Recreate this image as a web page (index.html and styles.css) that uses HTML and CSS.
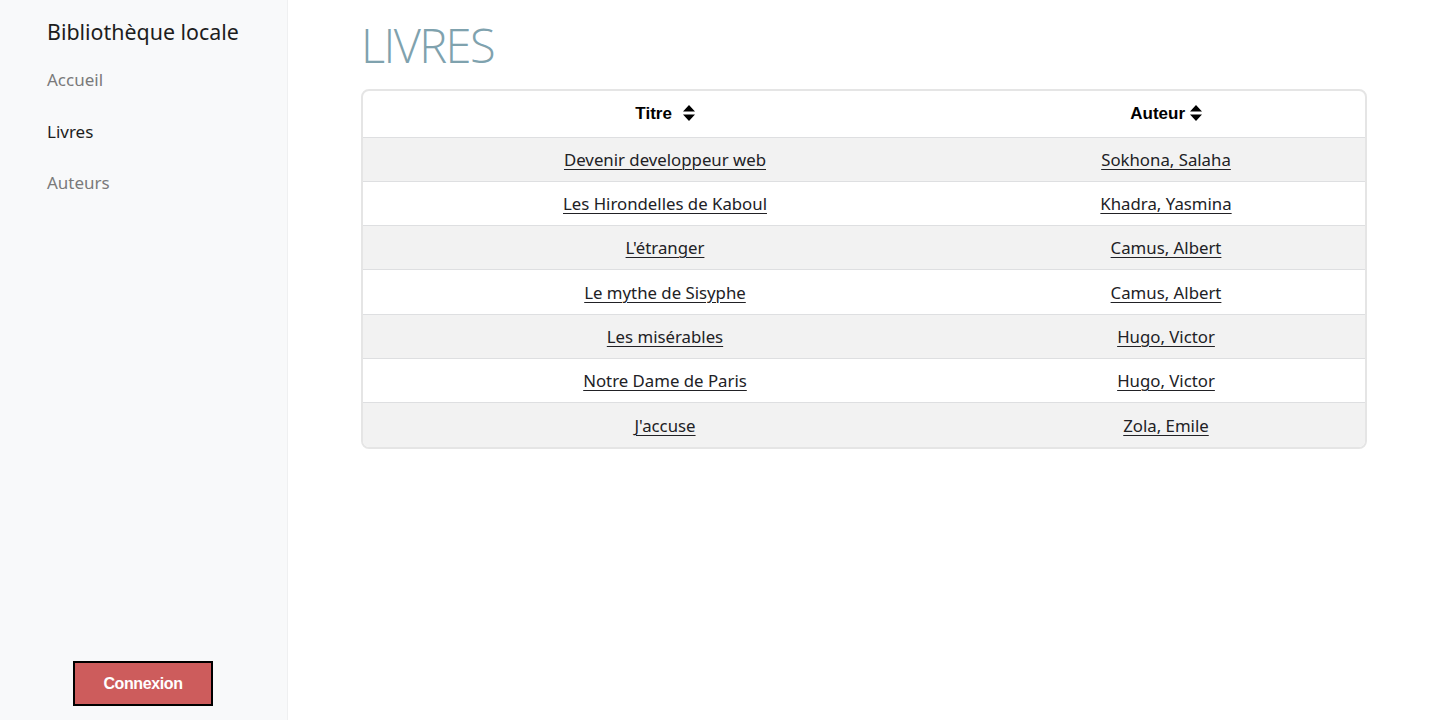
FILE: index.html
```html
<!DOCTYPE html>
<html lang="fr">
<head>
<meta charset="utf-8">
<title>Livres</title>
<link rel="stylesheet" href="styles.css">
</head>
<body>
<div class="layout">
  <aside class="sidebar">
    <div class="brand">Bibliothèque locale</div>
    <nav class="nav">
      <a class="nav-link" href="#">Accueil</a>
      <a class="nav-link active" href="#">Livres</a>
      <a class="nav-link" href="#">Auteurs</a>
    </nav>
    <div class="login-wrap">
      <button class="login">Connexion</button>
    </div>
  </aside>
  <main class="content">
    <h1 class="title">LIVRES</h1>
    <div class="table-box">
      <table class="books">
        <thead>
          <tr>
            <th class="col-title">Titre <svg class="sort sort-gap" viewBox="0 0 12 18" width="12" height="18"><path d="M6 1 L12 7.5 H0 Z M0 10.5 H12 L6 17 Z" fill="#000"/></svg></th>
            <th class="col-author">Auteur <svg class="sort" viewBox="0 0 12 18" width="12" height="18"><path d="M6 1 L12 7.5 H0 Z M0 10.5 H12 L6 17 Z" fill="#000"/></svg></th>
          </tr>
        </thead>
        <tbody>
          <tr><td><a href="#">Devenir developpeur web</a></td><td><a href="#">Sokhona, Salaha</a></td></tr>
          <tr><td><a href="#">Les Hirondelles de Kaboul</a></td><td><a href="#">Khadra, Yasmina</a></td></tr>
          <tr><td><a href="#">L'étranger</a></td><td><a href="#">Camus, Albert</a></td></tr>
          <tr><td><a href="#">Le mythe de Sisyphe</a></td><td><a href="#">Camus, Albert</a></td></tr>
          <tr><td><a href="#">Les misérables</a></td><td><a href="#">Hugo, Victor</a></td></tr>
          <tr><td><a href="#">Notre Dame de Paris</a></td><td><a href="#">Hugo, Victor</a></td></tr>
          <tr><td><a href="#">J'accuse</a></td><td><a href="#">Zola, Emile</a></td></tr>
        </tbody>
      </table>
    </div>
  </main>
</div>
</body>
</html>
```
FILE: styles.css
```css
* { box-sizing: border-box; }
html, body { margin: 0; padding: 0; }
body {
  font-family: "Noto Sans", "Open Sans", sans-serif;
  color: #212529;
  background: #fff;
}
.layout {
  display: flex;
  height: 720px;
}
.sidebar {
  width: 288px;
  flex: 0 0 288px;
  background: #f8f9fa;
  border-right: 1px solid #eff0f1;
  display: flex;
  flex-direction: column;
  padding: 17px 0 14px 47px;
}
.brand {
  font-size: 21.4px;
  color: #1d1d1d;
  line-height: 30px;
}
.nav {
  display: flex;
  flex-direction: column;
  margin-top: 8px;
}
.nav-link {
  font-size: 17px;
  line-height: 26px;
  padding: 12px 0 13.5px;
  color: #7a7a7a;
  text-decoration: none;
}
.nav-link.active { color: #1d1d1d; }
.login-wrap {
  margin-top: auto;
  padding-left: 26px;
}
.login {
  width: 140px;
  height: 45px;
  background: #cd5c5c;
  border: 2px solid #000;
  color: #fff;
  font-family: "Liberation Sans", Arial, sans-serif;
  font-weight: bold;
  font-size: 16px;
  letter-spacing: -0.4px;
  padding: 0;
}
.content {
  flex: 1;
  padding: 15px 73px 0 73px;
}
.title {
  margin: 0 0 14px;
  font-family: "Open Sans", sans-serif;
  font-weight: 300;
  font-size: 47px;
  line-height: 60px;
  color: #7fa2ae;
  letter-spacing: -1.6px;
}
.table-box {
  width: 1006px;
  border: 2px solid #e5e5e5;
  border-radius: 8px;
  overflow: hidden;
}
.books {
  width: 100%;
  border-collapse: collapse;
}
.books th {
  font-family: "Liberation Sans", Arial, sans-serif;
  font-weight: bold;
  font-size: 17px;
  height: 46px;
  text-align: center;
  color: #000;
}
.col-title { width: 604px; }
.sort {
  vertical-align: -3px;
}
.sort-gap { margin-left: 6px; }
.books td {
  text-align: center;
  height: 44.3px;
  border-top: 1px solid #dedfe1;
  font-size: 16.8px;
}
.books tbody tr:nth-child(odd) td { background: #f2f2f2; }
.books a {
  color: #212125;
  text-decoration: underline;
  text-underline-offset: 3px;
  text-decoration-thickness: 1px;
}
```
